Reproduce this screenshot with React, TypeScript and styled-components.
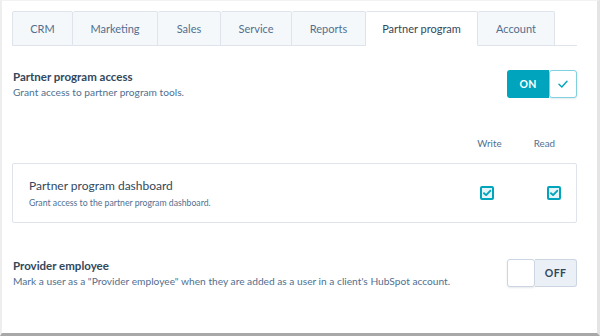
import styled, { createGlobalStyle } from 'styled-components';

const GlobalStyle = createGlobalStyle`
  html, body {
    margin: 0;
    padding: 0;
    background: #fff;
  }
  body {
    font-family: Lato, "Open Sans", sans-serif;
    color: #33475b;
  }
`;

const tabs = ['CRM', 'Marketing', 'Sales', 'Service', 'Reports', 'Partner program', 'Account'];
const tabWidths = [61, 85, 63, 71, 74, 112, 77];

const CheckIcon = ({ size = 12 }: { size?: number }) => (
  <svg width={size} height={size} viewBox="0 0 12 12" fill="none">
    <path d="M2 6.3 L4.8 9 L10 3.2" stroke="#00a4bd" strokeWidth="1.4" strokeLinecap="round" strokeLinejoin="round" />
  </svg>
);

const SmallCheck = () => (
  <svg width="10" height="10" viewBox="0 0 10 10" fill="none">
    <path d="M2 5.2 L4.1 7.1 L8.2 2.8" stroke="#00a4bd" strokeWidth="1.9" strokeLinecap="round" strokeLinejoin="round" />
  </svg>
);

export default function App() {
  return (
    <>
      <GlobalStyle />
      <Frame>
        <Panel>
          <TabBar>
            {tabs.map((t, i) => (
              <Tab key={t} $active={t === 'Partner program'} style={{ width: tabWidths[i] }}>
                {t}
              </Tab>
            ))}
            <TabFill />
          </TabBar>

          <SettingRow>
            <SettingText>
              <SettingTitle>Partner program access</SettingTitle>
              <SettingDesc>Grant access to partner program tools.</SettingDesc>
            </SettingText>
            <Toggle>
              <ToggleOn>ON</ToggleOn>
              <ToggleKnob $on>
                <CheckIcon />
              </ToggleKnob>
            </Toggle>
          </SettingRow>

          <ColumnHeads>
            <ColumnHead>Write</ColumnHead>
            <ColumnHead>Read</ColumnHead>
          </ColumnHeads>

          <PermCard>
            <SettingText>
              <CardTitle>Partner program dashboard</CardTitle>
              <CardDesc>Grant access to the partner program dashboard.</CardDesc>
            </SettingText>
            <CheckCells>
              <CheckCell>
                <Checkbox>
                  <SmallCheck />
                </Checkbox>
              </CheckCell>
              <CheckCell>
                <Checkbox>
                  <SmallCheck />
                </Checkbox>
              </CheckCell>
            </CheckCells>
          </PermCard>

          <SettingRow $top={35}>
            <SettingText>
              <SettingTitle>Provider employee</SettingTitle>
              <SettingDesc>
                Mark a user as a "Provider employee" when they are added as a user in a client's HubSpot account.
              </SettingDesc>
            </SettingText>
            <Toggle>
              <ToggleKnob />
              <ToggleOff>OFF</ToggleOff>
            </Toggle>
          </SettingRow>
        </Panel>
      </Frame>
    </>
  );
}

const Frame = styled.div`
  width: 600px;
  height: 336px;
  box-sizing: border-box;
  border-left: 2px solid #eeeeee;
  border-top: 1px solid #f2f2f2;
  border-right: 3px solid #e4e4e4;
  border-bottom: 3px solid #a8a8a8;
  background: #fff;
  overflow: hidden;
`;

const Panel = styled.div`
  padding: 10px 20px 0 10px;
  display: flex;
  flex-direction: column;
`;

const TabBar = styled.div`
  display: flex;
  height: 35px;
`;

const Tab = styled.div<{ $active?: boolean }>`
  box-sizing: border-box;
  display: flex;
  align-items: center;
  justify-content: center;
  font-size: 11px;
  color: ${(p) => (p.$active ? '#33475b' : '#516f90')};
  font-weight: 400;
  background: ${(p) => (p.$active ? '#fff' : '#f5f8fa')};
  border: 1px solid #dfe3eb;
  border-bottom: ${(p) => (p.$active ? '1px solid #fff' : '1px solid #dfe3eb')};
  border-left-width: 0;
  border-radius: 2px 2px 0 0;
  &:first-child {
    border-left-width: 1px;
  }
`;

const TabFill = styled.div`
  flex: 1;
  border-bottom: 1px solid #dfe3eb;
`;

const SettingRow = styled.div<{ $top?: number }>`
  display: flex;
  justify-content: space-between;
  align-items: center;
  padding-left: 1px;
  margin-top: ${(p) => p.$top ?? 23}px;
`;

const SettingText = styled.div`
  display: flex;
  flex-direction: column;
`;

const SettingTitle = styled.div`
  font-size: 11.5px;
  font-weight: 700;
  color: #33475b;
  line-height: 16px;
`;

const SettingDesc = styled.div`
  font-size: 10.2px;
  color: #516f90;
  line-height: 14px;
  margin-top: 0;
`;

const Toggle = styled.div`
  display: flex;
  width: 70px;
  height: 28px;
  border-radius: 3px;
`;

const ToggleOn = styled.div`
  flex: 1;
  background: #00a4bd;
  color: #fff;
  font-size: 10.5px;
  font-weight: 700;
  letter-spacing: 0.3px;
  display: flex;
  align-items: center;
  justify-content: center;
  border-radius: 3px 0 0 3px;
`;

const ToggleOff = styled.div`
  flex: 1;
  background: #eaf0f6;
  color: #33475b;
  font-size: 10.5px;
  font-weight: 700;
  letter-spacing: 0.3px;
  display: flex;
  align-items: center;
  justify-content: center;
  border: 1px solid #cbd6e2;
  border-left: none;
  border-radius: 0 3px 3px 0;
`;

const ToggleKnob = styled.div<{ $on?: boolean }>`
  box-sizing: border-box;
  width: 28px;
  height: 28px;
  background: #fff;
  border: 1px solid ${(p) => (p.$on ? '#7fd1de' : '#cbd6e2')};
  border-radius: 3px;
  display: flex;
  align-items: center;
  justify-content: center;
  box-shadow: 0 1px 2px rgba(45, 62, 80, 0.12);
`;

const ColumnHeads = styled.div`
  display: flex;
  justify-content: flex-end;
  margin-top: 37px;
  padding-right: 22px;
  gap: 32px;
`;

const ColumnHead = styled.div`
  font-size: 9.8px;
  color: #516f90;
  line-height: 14px;
`;

const PermCard = styled.div`
  margin-top: 13px;
  box-sizing: border-box;
  height: 60px;
  border: 1px solid #dfe3eb;
  border-radius: 2px;
  display: flex;
  align-items: center;
  justify-content: space-between;
  padding: 0 15px 0 16px;
`;

const CardTitle = styled.div`
  font-size: 12px;
  color: #33475b;
  line-height: 16px;
`;

const CardDesc = styled.div`
  font-size: 8.7px;
  color: #516f90;
  line-height: 13px;
  margin-top: 2px;
`;

const CheckCells = styled.div`
  display: flex;
  gap: 53px;
`;

const CheckCell = styled.div`
  display: flex;
  align-items: center;
  justify-content: center;
`;

const Checkbox = styled.div`
  box-sizing: border-box;
  width: 14px;
  height: 14px;
  border: 2px solid #00a4bd;
  border-radius: 2px;
  background: #e5f5f8;
  display: flex;
  align-items: center;
  justify-content: center;
`;
